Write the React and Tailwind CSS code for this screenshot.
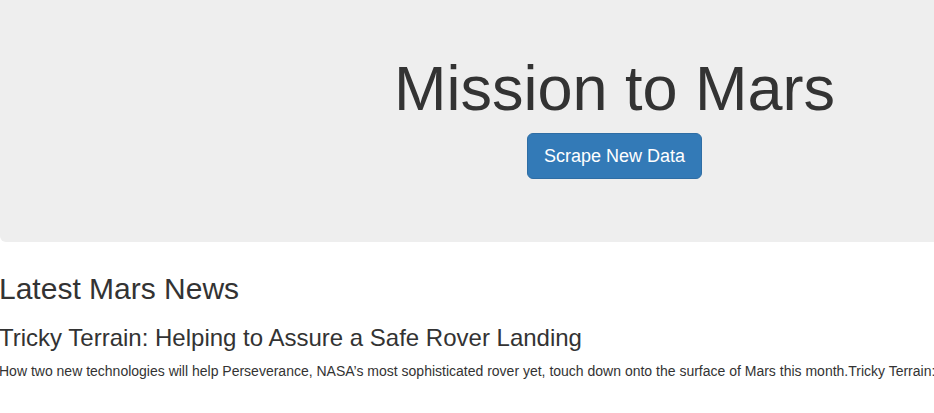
export default function App() {
  return (
    <div className="min-h-screen overflow-hidden bg-white font-['Liberation_Sans',Arial,sans-serif] text-sm leading-5 text-[#333333]">
      <header className="-mr-[295px] mb-[31px] rounded-b-md bg-[#eeeeee] pt-14 pb-[63px] text-center">
        <h1 className="mb-3 text-[63px] leading-[65px] font-medium">Mission to Mars</h1>
        <button
          type="button"
          className="rounded-md border border-[#2e6da4] bg-[#337ab7] px-4 py-[10px] text-lg leading-6 text-white"
        >
          Scrape New Data
        </button>
      </header>
      <main className="-ml-px">
        <h2 className="mb-[19px] text-[30px] leading-8">Latest Mars News</h2>
        <h3 className="mb-[9px] text-2xl leading-7">
          Tricky Terrain: Helping to Assure a Safe Rover Landing
        </h3>
        <p className="whitespace-nowrap">
          How two new technologies will help Perseverance, NASA’s most sophisticated rover yet, touch down onto the surface of Mars this month.Tricky Terrain:
        </p>
      </main>
    </div>
  );
}
